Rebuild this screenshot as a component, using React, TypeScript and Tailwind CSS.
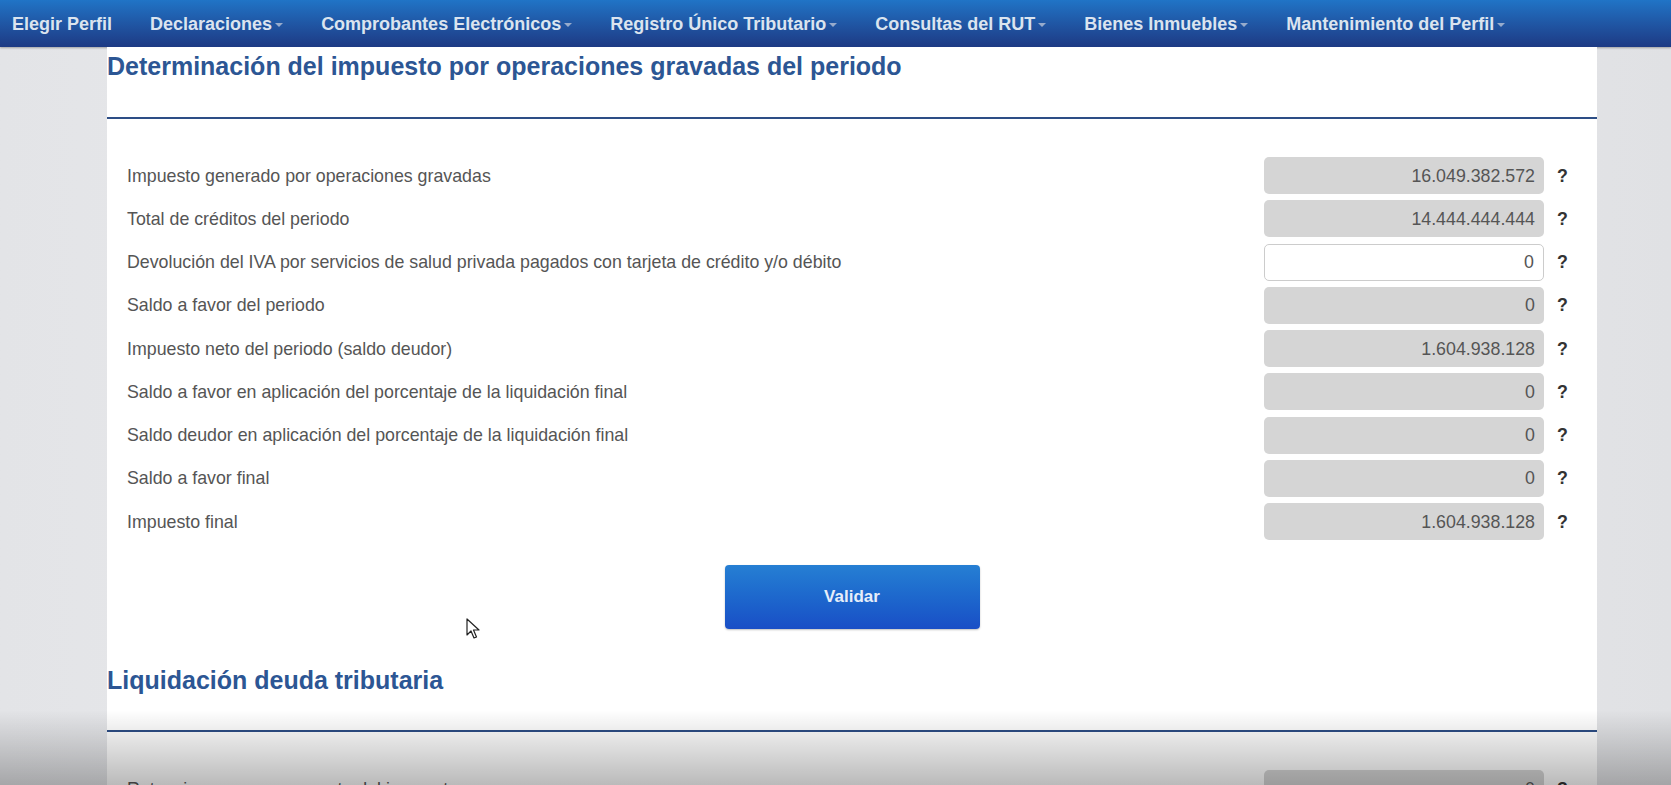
import { useState } from "react";

type row = {
  label: string;
  value: string;
  editable?: boolean;
};

const menu = [
  { text: "Elegir Perfil", caret: false },
  { text: "Declaraciones", caret: true },
  { text: "Comprobantes Electrónicos", caret: true },
  { text: "Registro Único Tributario", caret: true },
  { text: "Consultas del RUT", caret: true },
  { text: "Bienes Inmuebles", caret: true },
  { text: "Mantenimiento del Perfil", caret: true },
];

const rows: row[] = [
  { label: "Impuesto generado por operaciones gravadas", value: "16.049.382.572" },
  { label: "Total de créditos del periodo", value: "14.444.444.444" },
  {
    label:
      "Devolución del IVA por servicios de salud privada pagados con tarjeta de crédito y/o débito",
    value: "0",
    editable: true,
  },
  { label: "Saldo a favor del periodo", value: "0" },
  { label: "Impuesto neto del periodo (saldo deudor)", value: "1.604.938.128" },
  { label: "Saldo a favor en aplicación del porcentaje de la liquidación final", value: "0" },
  { label: "Saldo deudor en aplicación del porcentaje de la liquidación final", value: "0" },
  { label: "Saldo a favor final", value: "0" },
  { label: "Impuesto final", value: "1.604.938.128" },
];

const Campo = (props: { item: row }) => {
  const [value, setValue] = useState(props.item.value);
  return (
    <div className="flex h-[37px] items-center">
      <div className="flex-1 pl-[20px] text-[#555]">{props.item.label}</div>
      {props.item.editable ? (
        <input
          className="h-[37px] w-[280px] rounded-[5px] border border-[#ccc] bg-white pr-[9px] text-right text-[#555] outline-none"
          value={value}
          onChange={(e) => setValue(e.target.value)}
        />
      ) : (
        <div className="flex h-[37px] w-[280px] items-center justify-end rounded-[5px] bg-[#d5d5d5] pr-[9px] text-[#555]">
          {value}
        </div>
      )}
      <div className="w-[53px] pl-[13px] font-bold text-[#333]">?</div>
    </div>
  );
};

const App = () => {
  return (
    <div
      className="relative h-[785px] w-full overflow-hidden bg-gradient-to-r from-[#e3e4e7] via-[#eeeff1] to-[#e0e1e4] text-[17.8px] leading-[22px]"
      style={{ fontFamily: '"Liberation Sans", Arial, sans-serif' }}
    >
      {/* barra de menu */}
      <nav className="flex h-[47px] items-center bg-gradient-to-b from-[#2074c6] to-[#1d3a84] pl-[12px] text-[18px] font-bold text-[#dbe4ef] shadow-[0_1px_2px_rgba(0,0,0,0.3)]">
        {menu.map((m) => (
          <div key={m.text} className="mr-[38px] flex items-center">
            <span>{m.text}</span>
            {m.caret && (
              <span className="ml-[3px] mt-[2px] h-0 w-0 border-x-[4px] border-t-[4px] border-x-transparent border-t-[#97abcc]"></span>
            )}
          </div>
        ))}
      </nav>

      <div className="ml-[107px] w-[1490px] bg-white">
        <h3 className="border-b-2 border-[#2d4e86] pb-[35px] pt-[4px] text-[25px] font-bold leading-[31px] text-[#2c5694]">
          Determinación del impuesto por operaciones gravadas del periodo
        </h3>

        <div className="flex flex-col gap-[6.25px] pt-[38px]">
          {rows.map((r) => (
            <Campo key={r.label} item={r} />
          ))}
        </div>

        <div className="flex justify-center pt-[25px]">
          <button className="h-[64px] w-[255px] rounded-[4px] bg-gradient-to-b from-[#267fd3] to-[#1a4ec6] text-[17px] font-bold text-[#e6eefa] shadow-[0_1px_2px_rgba(0,0,0,0.25)]">
            Validar
          </button>
        </div>

        <h3 className="mt-[36px] border-b-2 border-[#2d4e86] pb-[34px] text-[25px] font-bold leading-[31px] text-[#2c5694]">
          Liquidación deuda tributaria
        </h3>

        <div className="pt-[38px]">
          <Campo item={{ label: "Retenciones pagos a cuenta del impuesto", value: "0" }} />
        </div>
      </div>

      {/* cursor */}
      <svg
        className="absolute left-[466px] top-[618px]"
        width="14"
        height="22"
        viewBox="0 0 14 22"
      >
        <path
          d="M1 1 L1 17 L5 13 L8 20 L10.5 19 L7.5 12 L13 12 Z"
          fill="white"
          stroke="#222"
          strokeWidth="1.2"
          strokeLinejoin="round"
        />
      </svg>

      {/* sombra inferior del video */}
      <div className="pointer-events-none absolute inset-x-0 bottom-0 h-[75px] bg-gradient-to-b from-transparent to-[rgba(0,0,0,0.27)]"></div>
    </div>
  );
};

export default App;
